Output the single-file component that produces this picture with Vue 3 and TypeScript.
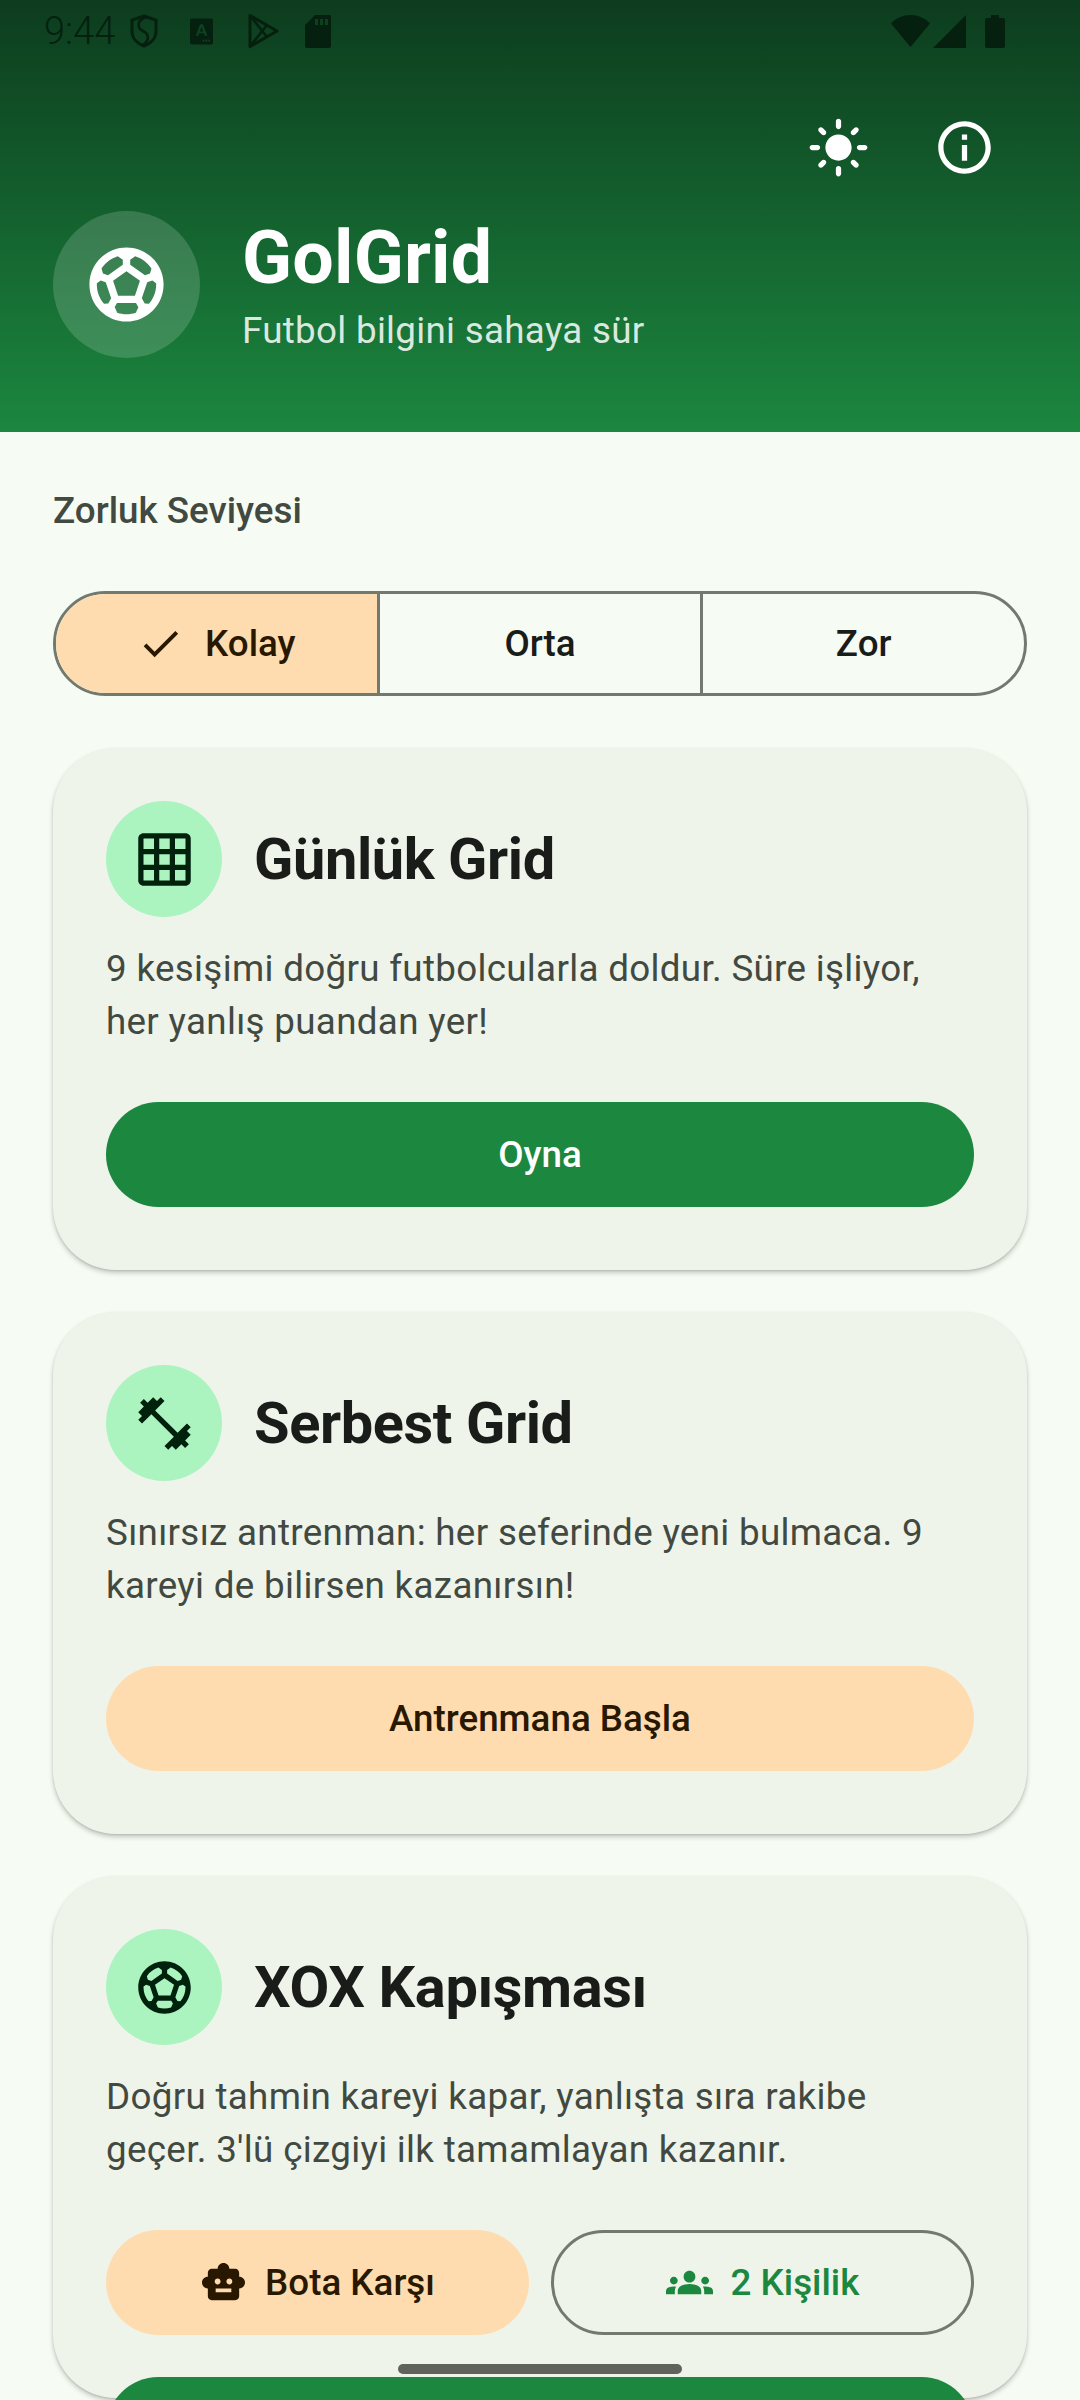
<script setup lang="ts">
const SOCCER = "M12 2C6.48 2 2 6.48 2 12s4.48 10 10 10 10-4.48 10-10S17.52 2 12 2zm1 3.3 1.35-.95c1.82.56 3.37 1.76 4.38 3.34l-.39 1.34-1.35.46L13 6.7V5.3zm-3.35-.95L11 5.3v1.4L7.01 9.49l-1.35-.46-.39-1.34c1.01-1.57 2.56-2.77 4.38-3.34zM7.08 17.11l-1.14.1C4.73 15.81 4 13.99 4 12c0-.12.01-.23.02-.35l1-.73 1.38.48 1.46 4.34-.78 1.37zm7.42 2.48c-.79.26-1.63.41-2.5.41s-1.71-.15-2.5-.41l-.69-1.49.64-1.1h5.11l.64 1.11-.7 1.48zM14.27 15H9.73l-1.35-4.02L12 8.44l3.63 2.54L14.27 15zm3.79 2.21-1.14-.1-.79-1.37 1.46-4.34 1.39-.47 1 .73c.01.11.02.22.02.34 0 1.99-.73 3.81-1.94 5.21z";
const GRID = "M20 2H4c-1.1 0-2 .9-2 2v16c0 1.1.9 2 2 2h16c1.1 0 2-.9 2-2V4c0-1.1-.9-2-2-2zM8 20H4v-4h4v4zm0-6H4v-4h4v4zm0-6H4V4h4v4zm6 12h-4v-4h4v4zm0-6h-4v-4h4v4zm0-6h-4V4h4v4zm6 12h-4v-4h4v4zm0-6h-4v-4h4v4zm0-6h-4V4h4v4z";
const FITNESS = "M20.57 14.86L22 13.43 20.57 12 17 15.57 8.43 7 12 3.43 10.57 2 9.14 3.43 7.71 2 5.57 4.14 4.14 2.71 2.71 4.14l1.43 1.43L2 7.71l1.43 1.43L2 10.57 3.43 12 7 8.43 15.57 17 12 20.57 13.43 22l1.43-1.43L16.29 22l2.14-2.14 1.43 1.43 1.43-1.43-1.43-1.43L22 16.29z";
const SUN = "M12 7c-2.76 0-5 2.24-5 5s2.24 5 5 5 5-2.24 5-5-2.24-5-5-5zM2 13h2c.55 0 1-.45 1-1s-.45-1-1-1H2c-.55 0-1 .45-1 1s.45 1 1 1zm18 0h2c.55 0 1-.45 1-1s-.45-1-1-1h-2c-.55 0-1 .45-1 1s.45 1 1 1zM11 2v2c0 .55.45 1 1 1s1-.45 1-1V2c0-.55-.45-1-1-1s-1 .45-1 1zm0 18v2c0 .55.45 1 1 1s1-.45 1-1v-2c0-.55-.45-1-1-1s-1 .45-1 1zM5.99 4.58c-.39-.39-1.03-.39-1.41 0-.39.39-.39 1.03 0 1.41l1.06 1.06c.39.39 1.03.39 1.41 0s.39-1.03 0-1.41L5.99 4.58zm12.37 12.37c-.39-.39-1.03-.39-1.41 0-.39.39-.39 1.03 0 1.41l1.06 1.06c.39.39 1.03.39 1.41 0 .39-.39.39-1.03 0-1.41l-1.06-1.06zm1.06-10.96c.39-.39.39-1.03 0-1.41-.39-.39-1.03-.39-1.41 0l-1.06 1.06c-.39.39-.39 1.03 0 1.41s1.03.39 1.41 0l1.06-1.06zM7.05 18.36c.39-.39.39-1.03 0-1.41-.39-.39-1.03-.39-1.41 0l-1.06 1.06c-.39.39-.39 1.03 0 1.41s1.03.39 1.41 0l1.06-1.06z";
const INFO = "M11 7h2v2h-2zm0 4h2v6h-2zm1-9C6.48 2 2 6.48 2 12s4.48 10 10 10 10-4.48 10-10S17.52 2 12 2zm0 18c-4.41 0-8-3.59-8-8s3.59-8 8-8 8 3.59 8 8-3.59 8-8 8z";
const CHECK = "M9 16.17L4.83 12l-1.42 1.41L9 19 21 7l-1.41-1.41z";
const BOT = "M20 9V7c0-1.1-.9-2-2-2h-3c0-1.66-1.34-3-3-3S9 3.34 9 5H6c-1.1 0-2 .9-2 2v2c-1.66 0-3 1.34-3 3s1.34 3 3 3v4c0 1.1.9 2 2 2h12c1.1 0 2-.9 2-2v-4c1.66 0 3-1.34 3-3s-1.34-3-3-3zM7.5 11.5C7.5 10.67 8.17 10 9 10s1.5.67 1.5 1.5S9.83 13 9 13s-1.5-.67-1.5-1.5zM16 17H8v-2h8v2zm-1-4c-.83 0-1.5-.67-1.5-1.5S14.17 10 15 10s1.5.67 1.5 1.5S15.83 13 15 13z";
const GROUPS = "M12 12.75c1.63 0 3.07.39 4.24.9 1.08.48 1.76 1.56 1.76 2.73V18H6v-1.61c0-1.18.68-2.26 1.76-2.73 1.17-.52 2.61-.91 4.24-.91zM4 13c1.1 0 2-.9 2-2s-.9-2-2-2-2 .9-2 2 .9 2 2 2zm1.13 1.1c-.37-.06-.74-.1-1.13-.1-.99 0-1.93.21-2.78.58C.48 14.9 0 15.62 0 16.43V18h4.5v-1.61c0-.83.23-1.61.63-2.29zM20 13c1.1 0 2-.9 2-2s-.9-2-2-2-2 .9-2 2 .9 2 2 2zm4 3.43c0-.81-.48-1.53-1.22-1.85-.85-.37-1.79-.58-2.78-.58-.39 0-.76.04-1.13.1.4.68.63 1.46.63 2.29V18H24v-1.57zM12 6c1.66 0 3 1.34 3 3s-1.34 3-3 3-3-1.34-3-3 1.34-3 3-3z";

const levels = [
  { name: "Kolay", selected: true },
  { name: "Orta", selected: false },
  { name: "Zor", selected: false },
];
</script>

<template>
  <div class="screen">
    <header class="hero">
      <div class="status">
        <span class="time">9:44</span>
        <svg class="st shield" viewBox="0 0 28 34" fill="none" stroke="currentColor" stroke-width="3">
          <path d="M14 2 L26 6 V17 C26 25 20 30 14 32 C8 30 2 25 2 17 V6 Z" />
          <path d="M17 3 C6 6 7 14 13 17 C19 20 20 26 13 31" stroke-width="2.6" />
        </svg>
        <svg class="st abox" viewBox="0 0 24 27">
          <path fill="currentColor" fill-rule="evenodd" d="M2 0H22a2 2 0 0 1 2 2V25a2 2 0 0 1-2 2H2a2 2 0 0 1-2-2V2a2 2 0 0 1 2-2ZM10.5 6 6 18H8.6L9.5 15.4H14.5L15.4 18H18L13.5 6ZM12 9 13.8 13.4H10.2Z" />
          <rect x="13" y="22" width="2" height="2" fill="#0d3f20" />
          <rect x="16" y="22" width="2" height="2" fill="#0d3f20" />
          <rect x="19" y="22" width="2" height="2" fill="#0d3f20" />
        </svg>
        <svg class="st play" viewBox="0 0 32 36" fill="none" stroke="currentColor" stroke-width="3" stroke-linejoin="round">
          <path d="M3 2.5 V33.5 L30 18 Z" />
          <path d="M3 2.5 L20 24 M3 33.5 L20 12" stroke-width="2.6" />
        </svg>
        <svg class="st sd" viewBox="0 0 26 33">
          <path fill="currentColor" fill-rule="evenodd" d="M10 0H24a2 2 0 0 1 2 2V31a2 2 0 0 1-2 2H2a2 2 0 0 1-2-2V10ZM10 4V10H13V4ZM15 4V10H18V4ZM20 4V10H23V4Z" />
        </svg>
        <span class="status-space"></span>
        <svg class="st wifi" viewBox="0 0 39 32"><path fill="currentColor" d="M19.5 32 0 8.5C5 3 12 0 19.5 0S34 3 39 8.5Z" /></svg>
        <svg class="st signal" viewBox="0 0 33 33"><path fill="currentColor" d="M33 0V33H0Z" /></svg>
        <svg class="st battery" viewBox="0 0 20 33"><path fill="currentColor" d="M6 0H14V3H18a2 2 0 0 1 2 2V31a2 2 0 0 1-2 2H2a2 2 0 0 1-2-2V5a2 2 0 0 1 2-2H6Z" /></svg>
      </div>
      <div class="actions">
        <span class="action"><svg class="i63" viewBox="0 0 24 24"><path fill="#fff" :d="SUN" /></svg></span>
        <span class="action"><svg class="i63" viewBox="0 0 24 24"><path fill="#fff" :d="INFO" /></svg></span>
      </div>
      <div class="brand">
        <span class="logo"><svg class="i89" viewBox="0 0 24 24"><path fill="#fff" :d="SOCCER" /></svg></span>
        <div class="brand-text">
          <h1>GolGrid</h1>
          <p>Futbol bilgini sahaya sür</p>
        </div>
      </div>
    </header>

    <main class="content">
      <div class="label">Zorluk Seviyesi</div>
      <div class="segments">
        <div v-for="l in levels" :key="l.name" class="segment" :class="{ on: l.selected }">
          <svg v-if="l.selected" class="i47" viewBox="0 0 24 24"><path fill="currentColor" :d="CHECK" /></svg>
          <span>{{ l.name }}</span>
        </div>
      </div>

      <section class="card">
        <div class="card-head">
          <span class="badge"><svg class="i63" viewBox="0 0 24 24"><path :d="GRID" /></svg></span>
          <h2>Günlük Grid</h2>
        </div>
        <p class="desc">9 kesişimi doğru futbolcularla doldur. Süre işliyor, her yanlış puandan yer!</p>
        <div class="btn primary">Oyna</div>
      </section>

      <section class="card">
        <div class="card-head">
          <span class="badge"><svg class="i63" viewBox="0 0 24 24"><path :d="FITNESS" /></svg></span>
          <h2>Serbest Grid</h2>
        </div>
        <p class="desc">Sınırsız antrenman: her seferinde yeni bulmaca. 9 kareyi de bilirsen kazanırsın!</p>
        <div class="btn tonal">Antrenmana Başla</div>
      </section>

      <section class="card">
        <div class="card-head">
          <span class="badge"><svg class="i63" viewBox="0 0 24 24"><path :d="SOCCER" /></svg></span>
          <h2>XOX Kapışması</h2>
        </div>
        <p class="desc">Doğru tahmin kareyi kapar, yanlışta sıra rakibe geçer. 3'lü çizgiyi ilk tamamlayan kazanır.</p>
        <div class="pair">
          <div class="btn tonal">
            <svg class="i47" viewBox="0 0 24 24"><path fill="currentColor" :d="BOT" /></svg>
            <span>Bota Karşı</span>
          </div>
          <div class="btn outline">
            <svg class="i47" viewBox="0 0 24 24"><path fill="currentColor" :d="GROUPS" /></svg>
            <span>2 Kişilik</span>
          </div>
        </div>
        <div class="btn primary last"></div>
      </section>
    </main>

    <div class="gesture"></div>
  </div>
</template>

<style>
html, body { margin: 0; padding: 0; background: #f6fbf3; }
</style>

<style scoped>
.screen {
  position: relative;
  width: 1080px;
  height: 2400px;
  overflow: hidden;
  background: #f6fbf3;
  font-family: Roboto, "Noto Sans", sans-serif;
  color: #191c18;
}
.hero {
  height: 432px;
  box-sizing: border-box;
  padding: 0 53px;
  background: linear-gradient(180deg, #0d3c1e 0%, #1b873f 100%);
}
.status {
  height: 84px;
  margin: 0 22px 0 -9px;
  padding-bottom: 22px;
  box-sizing: border-box;
  display: flex;
  align-items: center;
  color: #05200f;
}
.time { font-size: 38px; font-weight: 300; width: 86px; line-height: 1; }
.st { display: block; flex: none; }
.shield { width: 28px; height: 34px; margin-right: 32px; }
.abox { width: 23px; height: 27px; margin-right: 34px; }
.play { width: 32px; height: 36px; margin-right: 26px; }
.sd { width: 26px; height: 33px; }
.status-space { flex: 1; }
.wifi { width: 39px; height: 32px; margin-right: 3px; }
.signal { width: 33px; height: 33px; margin-right: 19px; }
.battery { width: 20px; height: 33px; }
.actions { display: flex; justify-content: flex-end; height: 126px; }
.action { width: 126px; height: 126px; display: flex; align-items: center; justify-content: center; }
.i63 { width: 63px; height: 63px; display: block; flex: none; }
.i89 { width: 89px; height: 89px; display: block; flex: none; }
.i47 { width: 47px; height: 47px; display: block; flex: none; }
.brand { display: flex; align-items: center; gap: 42px; margin-top: 1px; }
.logo {
  width: 147px;
  height: 147px;
  border-radius: 50%;
  background: rgba(255, 255, 255, 0.16);
  display: flex;
  align-items: center;
  justify-content: center;
}
.brand-text h1 { margin: 0; font-size: 73.5px; line-height: 92px; font-weight: 700; color: #fff; letter-spacing: 0.2px; }
.brand-text p { margin: 0; font-size: 36.75px; line-height: 53px; color: rgba(255, 255, 255, 0.85); letter-spacing: 0.3px; }
.content { padding: 0 53px; }
.label { margin-top: 58px; height: 42px; line-height: 42px; font-size: 36.75px; font-weight: 500; color: #414941; }
.segments {
  margin-top: 59px;
  height: 105px;
  box-sizing: border-box;
  display: flex;
  border: 3px solid #72796f;
  border-radius: 53px;
  overflow: hidden;
}
.segment {
  flex: 1;
  display: flex;
  align-items: center;
  justify-content: center;
  gap: 21px;
  font-size: 36.75px;
  font-weight: 500;
  color: #191c18;
}
.segment + .segment { border-left: 3px solid #72796f; }
.segment.on { background: #ffdcb0; color: #291800; }
.card {
  margin-top: 42px;
  box-sizing: border-box;
  height: 522px;
  padding: 53px;
  border-radius: 63px;
  background: #eff4eb;
  box-shadow: 0 3px 5px rgba(0, 0, 0, 0.2), 0 1px 2px rgba(0, 0, 0, 0.1);
}
.segments + .card { margin-top: 52px; }
.card-head { display: flex; align-items: center; gap: 32px; }
.badge {
  width: 116px;
  height: 116px;
  border-radius: 50%;
  background: #abf4bf;
  display: flex;
  align-items: center;
  justify-content: center;
  fill: #00210c;
}
h2 { margin: 0; font-size: 57.75px; font-weight: 700; line-height: 74px; color: #191c18; letter-spacing: -0.4px; }
.desc { margin: 25px 0 54px; font-size: 36.75px; line-height: 53px; letter-spacing: 0.32px; color: #414941; }
.btn {
  height: 105px;
  border-radius: 53px;
  display: flex;
  align-items: center;
  justify-content: center;
  gap: 21px;
  font-size: 36.75px;
  font-weight: 500;
  box-sizing: border-box;
}
.primary { background: #1b873f; color: #fff; }
.tonal { background: #ffdcb0; color: #291800; }
.outline { border: 3px solid #72796f; color: #1b873f; }
.pair { display: grid; grid-template-columns: 1fr 1fr; gap: 22px; }
.pair .btn { gap: 18px; }
.last { margin-top: 42px; }
.gesture {
  position: absolute;
  left: 398px;
  top: 2364px;
  width: 284px;
  height: 10px;
  border-radius: 5px;
  background: #60625c;
}
</style>
